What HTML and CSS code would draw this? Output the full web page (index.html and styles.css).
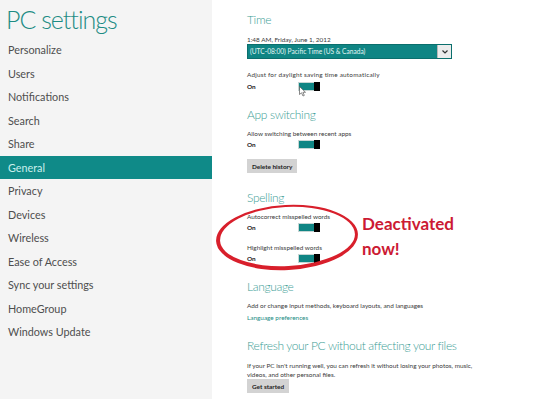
FILE: index.html
```html
<!DOCTYPE html>
<html lang="en">
<head>
    <meta charset="UTF-8">
    <title>PC settings</title>
    <link rel="stylesheet" href="styles.css">
</head>
<body>
    <div class="screen">
        <div class="sidebar">
            <h1 class="title">PC settings</h1>
            <ul class="nav">
                <li>Personalize</li>
                <li>Users</li>
                <li>Notifications</li>
                <li>Search</li>
                <li>Share</li>
                <li class="active">General</li>
                <li>Privacy</li>
                <li>Devices</li>
                <li>Wireless</li>
                <li>Ease of Access</li>
                <li>Sync your settings</li>
                <li>HomeGroup</li>
                <li>Windows Update</li>
            </ul>
        </div>

        <div class="content">
            <div class="section section-time">
                <h2 class="heading-first">Time</h2>
                <p class="label">1:48 AM, Friday, June 1, 2012</p>
                <div class="select">
                    <span class="select-text">(UTC-08:00) Pacific Time (US &amp; Canada)</span>
                    <span class="select-arrow">
                        <svg width="6" height="4" viewBox="0 0 6 4"><path d="M0.5 0.5 L3 3 L5.5 0.5" fill="none" stroke="#333" stroke-width="1.2"/></svg>
                    </span>
                </div>
                <p class="label label-after-select label-wide">Adjust for daylight saving time automatically</p>
                <div class="toggle-row">
                    <span class="state">On</span>
                    <span class="toggle"><span class="thumb"></span></span>
                    <svg class="cursor" width="8" height="11" viewBox="0 0 8 11">
                        <path d="M0.5 0.5 L0.5 8.5 L2.5 6.8 L4 10 L5.3 9.4 L3.9 6.3 L6.5 6.3 Z" fill="#fff" stroke="#555" stroke-width="0.7"/>
                    </svg>
                </div>
            </div>

            <div class="section section-apps">
                <h2>App switching</h2>
                <p class="label">Allow switching between recent apps</p>
                <div class="toggle-row">
                    <span class="state">On</span>
                    <span class="toggle"><span class="thumb"></span></span>
                </div>
                <button class="btn">Delete history</button>
            </div>

            <div class="section section-spelling">
                <h2>Spelling</h2>
                <p class="label">Autocorrect misspelled words</p>
                <div class="toggle-row">
                    <span class="state">On</span>
                    <span class="toggle"><span class="thumb"></span></span>
                </div>
                <p class="label label-gap">Highlight misspelled words</p>
                <div class="toggle-row">
                    <span class="state">On</span>
                    <span class="toggle"><span class="thumb"></span></span>
                </div>
                <div class="ring"></div>
                <div class="note">Deactivated<br>now!</div>
            </div>

            <div class="section section-language">
                <h2>Language</h2>
                <p class="label">Add or change input methods, keyboard layouts, and languages</p>
                <p class="link">Language preferences</p>
            </div>

            <div class="section section-refresh">
                <h2 class="heading-last">Refresh your PC without affecting your files</h2>
                <p class="label">If your PC isn't running well, you can refresh it without losing your photos, music,<br>videos, and other personal files.</p>
                <button class="btn btn-tight">Get started</button>
            </div>
        </div>
    </div>
</body>
</html>
```

FILE: styles.css
```css
* {
    margin: 0;
    padding: 0;
    box-sizing: border-box;
}

body {
    font-family: 'Lato', 'Open Sans', sans-serif;
    background: #ffffff;
    color: #333333;
}

.screen {
    display: flex;
    width: 540px;
    height: 399px;
    overflow: hidden;
}

/* left column */
.sidebar {
    width: 212px;
    flex-shrink: 0;
    background: #f4f4f4;
}

.title {
    font-size: 25px;
    font-weight: 300;
    letter-spacing: -1px;
    color: #1d8c84;
    padding: 2px 0 0 6px;
    height: 38px;
    line-height: 34px;
}

.nav {
    list-style: none;
}

.nav li {
    height: 23.5px;
    line-height: 23px;
    padding-left: 8px;
    font-size: 10.8px;
    color: #4e4e4e;
}

.nav li.active {
    background: #0f8a88;
    color: #c9efec;
}

/* right column */
.content {
    flex: 1;
    padding: 11px 0 0 35px;
}

.section {
    position: relative;
}

.section h2 {
    font-size: 12px;
    font-weight: 300;
    letter-spacing: -0.35px;
    color: #3c9e96;
    line-height: 18px;
    margin-bottom: 4.5px;
}

.section h2.heading-first,
.section h2.heading-last {
    margin-bottom: 5.5px;
}

.label {
    font-size: 6.4px;
    line-height: 9px;
    color: #3a3a3a;
}

.label-wide {
    letter-spacing: 0.2px;
}

.label-after-select {
    margin-top: 10.5px;
}

.label-gap {
    margin-top: 9.5px;
}

.select {
    display: flex;
    width: 205px;
    height: 15px;
    background: #0f8584;
    border: 1px solid #0b6f6d;
    margin-top: 0.5px;
}

.select-text {
    flex: 1;
    font-size: 6.6px;
    line-height: 13px;
    color: #e4f6f4;
    padding-left: 2px;
}

.select-arrow {
    display: flex;
    align-items: center;
    justify-content: center;
    width: 14px;
    background: #ececec;
    border-left: 1px solid #b8b8b8;
}

.toggle-row {
    position: relative;
    display: flex;
    align-items: center;
    height: 12px;
    margin-top: 0.5px;
}

.section-time .toggle-row {
    margin-top: 1.5px;
}

.state {
    width: 51px;
    font-size: 6.4px;
    font-weight: 700;
    color: #222;
}

.toggle {
    position: relative;
    display: block;
    width: 22px;
    height: 9px;
    background: #0f8584;
    border: 1px solid #c6d6d4;
    border-right: none;
}

.thumb {
    position: absolute;
    right: 0;
    top: -1px;
    width: 6px;
    height: 9px;
    background: #000;
}

.cursor {
    position: absolute;
    left: 52px;
    top: 6px;
}

.btn {
    display: block;
    font-family: inherit;
    font-size: 6.4px;
    font-weight: 700;
    color: #222;
    background: #d3d3d3;
    border: none;
    height: 14px;
    padding: 0 5px;
    margin-top: 9px;
}

.btn-tight {
    margin-top: 0.5px;
}

.section-time {
    margin-bottom: 14px;
}

.section-apps {
    margin-bottom: 16px;
}

.section-spelling {
    margin-bottom: 14px;
}

.section-language {
    margin-bottom: 15.5px;
}

/* annotation drawn over the screenshot */
.ring {
    position: absolute;
    left: -31px;
    top: 16px;
    width: 142px;
    height: 65px;
    border: 3px solid #d81f2b;
    border-top-width: 2.5px;
    border-right-width: 3px;
    border-bottom-width: 4px;
    border-left-width: 4px;
    border-radius: 50%;
    transform: rotate(-3deg);
}

.note {
    position: absolute;
    left: 115px;
    top: 22px;
    font-family: 'Lato', sans-serif;
    font-size: 17px;
    font-weight: 700;
    line-height: 25px;
    color: #cc1a33;
}

.link {
    font-size: 6.4px;
    line-height: 9px;
    color: #1d8c84;
    margin-top: 3px;
}
```
